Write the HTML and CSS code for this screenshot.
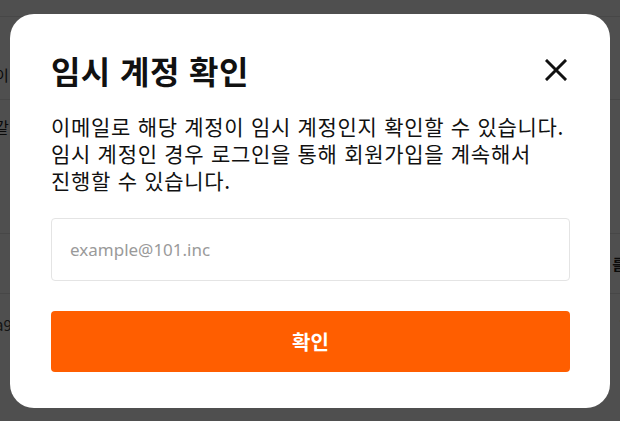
FILE: index.html
```html
<!DOCTYPE html>
<html lang="ko">
<head>
<meta charset="utf-8">
<link rel="stylesheet" href="styles.css">
</head>
<body>
<div class="page">
  <div class="row row-top"></div>
  <div class="row row-a"><span class="cell-left">이</span></div>
  <div class="row row-b"><span class="cell-left">같</span></div>
  <div class="row row-c"><span class="cell-right">를</span></div>
  <div class="row row-d"><span class="cell-left light">a9</span><span class="cell-right light">*</span></div>
</div>
<div class="overlay">
  <div class="modal" role="dialog">
    <div class="modal-head">
      <h2 class="modal-title">임시 계정 확인</h2>
      <button class="close" aria-label="닫기">
        <svg width="22" height="22" viewBox="0 0 22 22"><path d="M2 2 L20 20 M20 2 L2 20" stroke="#111" stroke-width="3" stroke-linecap="square" fill="none"/></svg>
      </button>
    </div>
    <p class="modal-desc">이메일로 해당 계정이 임시 계정인지 확인할 수 있습니다.<br>임시 계정인 경우 로그인을 통해 회원가입을 계속해서<br>진행할 수 있습니다.</p>
    <input class="email" type="text" placeholder="example@101.inc">
    <button class="confirm">확인</button>
  </div>
</div>
</body>
</html>
```

FILE: styles.css
```css
* { box-sizing: border-box; }
html, body { margin: 0; padding: 0; }
body {
  width: 620px;
  height: 421px;
  overflow: hidden;
  background: #fff;
  font-family: "Noto Sans CJK KR", "Noto Sans", sans-serif;
  color: #111;
}
.page {
  display: flex;
  flex-direction: column;
}
.row {
  display: flex;
  align-items: center;
  border-bottom: 1px solid #e6e6e6;
  font-size: 15px;
  color: #222;
}
.row-top { height: 17px; }
.row-a { height: 83px; align-items: flex-end; padding-bottom: 14px; }
.row-b { height: 134px; align-items: flex-start; padding-top: 16px; }
.row-c { height: 60px; }
.row-d { height: 60px; border-bottom: none; }
.cell-left { margin-left: -5px; }
.cell-right { margin-left: auto; margin-right: -6px; font-weight: 700; }
.light { color: #444; font-weight: 400; }

.overlay {
  position: fixed;
  inset: 0;
  background: rgba(0, 0, 0, 0.69);
  display: flex;
  align-items: center;
  justify-content: center;
}
.modal {
  width: 600px;
  background: #fff;
  border-radius: 24px;
  padding: 34px 40px 36px 41px;
  display: flex;
  flex-direction: column;
}
.modal-head {
  display: flex;
  align-items: center;
  justify-content: space-between;
  height: 44px;
}
.modal-title {
  margin: 0;
  font-size: 32px;
  font-weight: 700;
  letter-spacing: 0.4px;
  line-height: 44px;
  color: #111;
}
.close {
  border: 0;
  background: none;
  padding: 0;
  margin-right: 3px;
  width: 22px;
  height: 22px;
  display: flex;
}
.modal-desc {
  margin: 21px 0 0;
  font-size: 21px;
  letter-spacing: 0.7px;
  line-height: 27px;
  color: #111;
}
.email {
  margin-top: 24px;
  height: 63px;
  border: 1px solid #e4e4e4;
  border-radius: 4px;
  padding: 0 18px;
  font-family: "Noto Sans", sans-serif;
  font-size: 17px;
  color: #111;
  outline: none;
}
.email::placeholder { color: #9a9a9a; }
.confirm {
  margin-top: 30px;
  height: 61px;
  border: 0;
  border-radius: 4px;
  background: #ff5e00;
  color: #fff;
  font-family: "Noto Sans CJK KR", sans-serif;
  font-size: 20px;
  font-weight: 700;
}
```
